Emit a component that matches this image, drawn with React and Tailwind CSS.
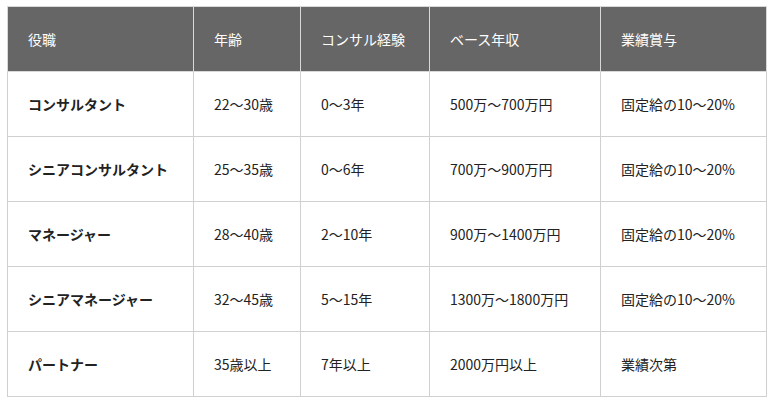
import React from "react";

const rows = [
  ["コンサルタント", "22〜30歳", "0〜3年", "500万〜700万円", "固定給の10〜20%"],
  ["シニアコンサルタント", "25〜35歳", "0〜6年", "700万〜900万円", "固定給の10〜20%"],
  ["マネージャー", "28〜40歳", "2〜10年", "900万〜1400万円", "固定給の10〜20%"],
  ["シニアマネージャー", "32〜45歳", "5〜15年", "1300万〜1800万円", "固定給の10〜20%"],
  ["パートナー", "35歳以上", "7年以上", "2000万円以上", "業績次第"],
];

const heads = ["役職", "年齢", "コンサル経験", "ベース年収", "業績賞与"];
const widths = ["w-[186px]", "w-[107px]", "w-[129px]", "w-[171px]", "w-[166px]"];

export default function App() {
  return (
    <div className="bg-white min-h-screen pl-[7px] pt-[6px] font-['Noto_Sans_CJK_JP','Noto_Sans',sans-serif] text-[14px] text-[#222]">
      <table className="border-collapse table-fixed w-[759px] border border-[#d0d0d0]">
        <thead>
          <tr className="h-[65px] bg-[#666666]">
            {heads.map((h, i) => (
              <th
                key={h}
                className={`${widths[i]} border border-[#d8d8d8] px-[20px] text-left font-normal text-white`}
              >
                {h}
              </th>
            ))}
          </tr>
        </thead>
        <tbody>
          {rows.map((r) => (
            <tr key={r[0]} className="h-[65px]">
              {r.map((c, i) => (
                <td
                  key={i}
                  className={`border border-[#d0d0d0] px-[20px] ${i === 0 ? "font-bold" : ""}`}
                >
                  {c}
                </td>
              ))}
            </tr>
          ))}
        </tbody>
      </table>
    </div>
  );
}
